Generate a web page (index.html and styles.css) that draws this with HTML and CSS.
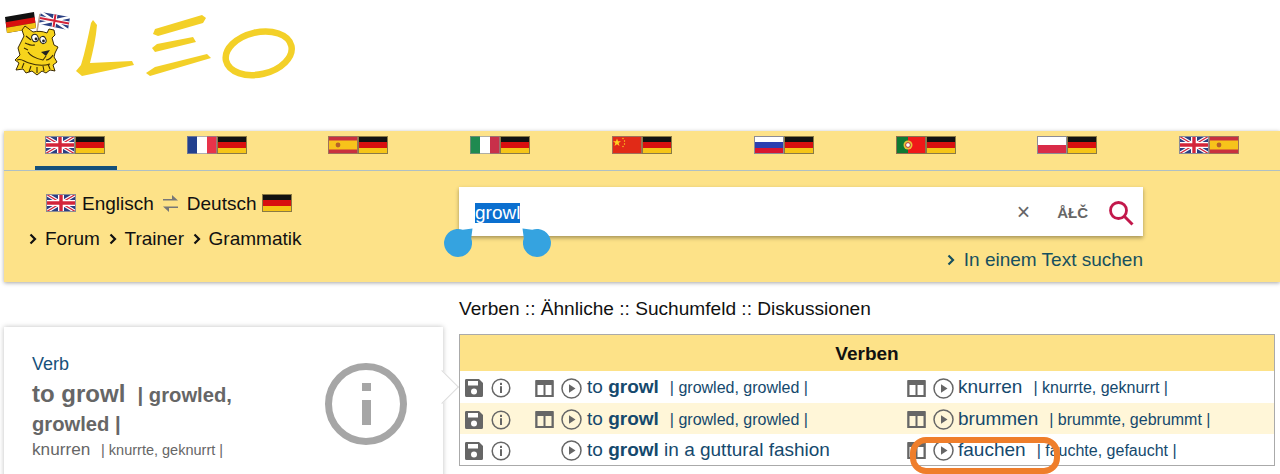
FILE: index.html
```html
<!DOCTYPE html>
<html lang="de">
<head>
<meta charset="utf-8">
<title>LEO Englisch-Deutsch</title>
<link rel="stylesheet" href="styles.css">
</head>
<body>
<svg class="defs" width="0" height="0" aria-hidden="true">
  <symbol id="de" viewBox="0 0 30 18"><rect width="30" height="6" fill="#111"/><rect y="6" width="30" height="6" fill="#d8100f"/><rect y="12" width="30" height="6" fill="#f5c518"/><rect x=".5" y=".5" width="29" height="17" fill="none" stroke="#8a7a45"/></symbol>
  <symbol id="uk" viewBox="0 0 30 18"><rect width="30" height="18" fill="#2a3f82"/><path d="M0 0L30 18M30 0L0 18" stroke="#fff" stroke-width="3.6"/><path d="M0 0L30 18M30 0L0 18" stroke="#d3243a" stroke-width="1.2"/><path d="M15 0V18M0 9H30" stroke="#fff" stroke-width="6"/><path d="M15 0V18M0 9H30" stroke="#d3243a" stroke-width="3.4"/><rect x=".5" y=".5" width="29" height="17" fill="none" stroke="#8c8c96"/></symbol>
  <symbol id="fr" viewBox="0 0 30 18"><rect width="10" height="18" fill="#22408f"/><rect x="10" width="10" height="18" fill="#fff"/><rect x="20" width="10" height="18" fill="#e8334a"/><rect x=".5" y=".5" width="29" height="17" fill="none" stroke="#8c8c96" stroke-opacity=".7"/></symbol>
  <symbol id="es" viewBox="0 0 30 18"><rect width="30" height="18" fill="#c9303e"/><rect y="4.5" width="30" height="9" fill="#f7c31b"/><circle cx="10" cy="9" r="2.4" fill="#b5612a"/><rect x=".5" y=".5" width="29" height="17" fill="none" stroke="#a0705a"/></symbol>
  <symbol id="it" viewBox="0 0 30 18"><rect width="10" height="18" fill="#1f8a50"/><rect x="10" width="10" height="18" fill="#fff"/><rect x="20" width="10" height="18" fill="#c9304a"/><rect x=".5" y=".5" width="29" height="17" fill="none" stroke="#8c8c80" stroke-opacity=".7"/></symbol>
  <symbol id="cn" viewBox="0 0 30 18"><rect width="30" height="18" fill="#e12a17"/><path d="M5 2.5l1 2.8 3-.1-2.400 1.800.9 2.900-2.500-1.700-2.500 1.700.9-2.900L1 5.200l3 .1z" fill="#ffd21f"/><circle cx="11" cy="2.500" r=".7" fill="#ffd21f"/><circle cx="12.500" cy="5" r=".7" fill="#ffd21f"/><circle cx="12.500" cy="8" r=".7" fill="#ffd21f"/><circle cx="11" cy="10.500" r=".7" fill="#ffd21f"/><rect x=".5" y=".5" width="29" height="17" fill="none" stroke="#a0705a"/></symbol>
  <symbol id="ru" viewBox="0 0 30 18"><rect width="30" height="6" fill="#fff"/><rect y="6" width="30" height="6" fill="#2b3fb0"/><rect y="12" width="30" height="6" fill="#d8152f"/><rect x=".5" y=".5" width="29" height="17" fill="none" stroke="#8c8c96"/></symbol>
  <symbol id="pt" viewBox="0 0 30 18"><rect width="30" height="18" fill="#f01818"/><rect width="12" height="18" fill="#0f7a32"/><circle cx="12" cy="9" r="4.500" fill="#e8c23a"/><circle cx="12" cy="9" r="2.400" fill="#fff" stroke="#b3352a"/><rect x=".5" y=".5" width="29" height="17" fill="none" stroke="#8c7050"/></symbol>
  <symbol id="pl" viewBox="0 0 30 18"><rect width="30" height="9" fill="#fff"/><rect y="9" width="30" height="9" fill="#d92b48"/><rect x=".5" y=".5" width="29" height="17" fill="none" stroke="#8c8c96"/></symbol>
  <symbol id="chev" viewBox="0 0 8 12"><path d="M1.500 1.500L6 6l-4.500 4.500" fill="none" stroke="currentColor" stroke-width="2.200"/></symbol>
  <symbol id="save" viewBox="0 0 20 20"><path d="M2 1h13l4 4v12.500a1.500 1.500 0 0 1-1.500 1.500h-15A1.500 1.500 0 0 1 1 17.500v-15A1.500 1.500 0 0 1 2 1z" fill="#666"/><rect x="4" y="3" width="10" height="4.500" fill="#fff"/><circle cx="10" cy="13.500" r="3" fill="#fff"/></symbol>
  <symbol id="info" viewBox="0 0 20 20"><circle cx="10" cy="10" r="8.800" fill="none" stroke="#666" stroke-width="1.500"/><rect x="9" y="4.800" width="2" height="2.200" fill="#666"/><rect x="9" y="8.200" width="2" height="6.800" fill="#666"/></symbol>
  <symbol id="book" viewBox="0 0 19 19"><path fill-rule="evenodd" d="M1 1h17a.8.8 0 0 1 .8.800V18H.2V1.800A.8.8 0 0 1 1 1zM2.500 6v10h6V6zm8 0v10h6V6z" fill="#666"/></symbol>
  <symbol id="play" viewBox="0 0 21 21"><circle cx="10.500" cy="10.500" r="9.500" fill="none" stroke="#666" stroke-width="1.500"/><path d="M8 6.200l6.500 4.300L8 14.800z" fill="#666"/></symbol>
  <symbol id="drop" viewBox="0 0 30 30"><path d="M29.500 1.500L28.200 11.200A14 14 0 1 1 19.800 2.800z" fill="#35a3e0"/></symbol>
</svg>

<header class="top">
  <svg class="logo" width="300" height="90" viewBox="0 0 300 90" role="img" aria-label="LEO">
    <path d="M37 31L40 14" stroke="#b9a38f" stroke-width="1.500"/>
    <path d="M5 17L34 12 36 28 7 33z" fill="#111"/>
    <path d="M5.700 22.300L34.700 17.300 35.400 22.700 6.400 27.700z" fill="#d8100f"/>
    <path d="M6.400 27.700L35.400 22.700 36 28 7 33z" fill="#f5c518"/>
    <path d="M41 12L70 17 68 30 39 24z" fill="#2a3f82"/>
    <path d="M41 12L68 30M70 17L39 24" stroke="#fff" stroke-width="2.500"/>
    <path d="M55.500 14.500L53.500 27M40 18L69 23.500" stroke="#fff" stroke-width="4"/>
    <path d="M55.500 14.500L53.500 27M40 18L69 23.500" stroke="#d3243a" stroke-width="2"/>
    <path d="M22 30L25 26 29 29 33 32C38 31 42 31 47 33L49 29 54 30 55 35 52 38 54 45 58 47 55 53 54 57 57 62 53 65 55 71 50 70 46 73 42 71 37 75 32 71 26 73 23 69 16 70 19 63 15 60 20 55 18 48 21 42 24 36z" fill="#f7d41c" stroke="#3a2a05" stroke-width="1"/>
    <ellipse cx="35" cy="38" rx="3.200" ry="3.800" fill="#fff" stroke="#222" transform="rotate(-20 35 38)"/>
    <ellipse cx="43" cy="40" rx="3" ry="3.600" fill="#fff" stroke="#222" transform="rotate(-20 43 40)"/>
    <circle cx="36" cy="39" r="1.400" fill="#222"/><circle cx="43.500" cy="41" r="1.400" fill="#222"/>
    <path d="M41 52L50 50 46 56z" fill="#222"/>
    <path d="M28 52C31 57 38 59 43 60L46 56M46 60C49 60 52 57 53 55M17 60C22 58 24 62 29 63 35 65 44 66 50 64M26 36L31 40M25 43L30 45M24 48L28 50M29 72L31 66M37 73V67M44 71L43 66M22 68L24 63M50 69L48 64M28 44C31 46 33 45 35 45" fill="none" stroke="#3a2a05" stroke-width="1.100"/>
    <g fill="#f3d028">
      <path d="M91 23L93 20 97 25C96 38 93 51 90 63L132 61 134 65 82 76 76 71 81 65C85 52 88 37 91 23z"/>
      <path d="M153 34L155 29 202 15 206 18 203 23 158 36z"/>
      <path d="M152 48L157 44 193 37 196 42 155 52z"/>
      <path d="M146 73L155 67 207 54 211 58 150 76z"/>
    </g>
    <ellipse cx="258.700" cy="53.300" rx="33.500" ry="21" fill="none" stroke="#f3d028" stroke-width="6.500" transform="rotate(-13 258.700 53.300)"/>
  </svg>
</header>

<section class="panel">
  <nav class="tabs">
    <a class="tab active"><svg class="flag"><use href="#uk"/></svg><svg class="flag"><use href="#de"/></svg></a>
    <a class="tab"><svg class="flag"><use href="#fr"/></svg><svg class="flag"><use href="#de"/></svg></a>
    <a class="tab"><svg class="flag"><use href="#es"/></svg><svg class="flag"><use href="#de"/></svg></a>
    <a class="tab"><svg class="flag"><use href="#it"/></svg><svg class="flag"><use href="#de"/></svg></a>
    <a class="tab"><svg class="flag"><use href="#cn"/></svg><svg class="flag"><use href="#de"/></svg></a>
    <a class="tab"><svg class="flag"><use href="#ru"/></svg><svg class="flag"><use href="#de"/></svg></a>
    <a class="tab"><svg class="flag"><use href="#pt"/></svg><svg class="flag"><use href="#de"/></svg></a>
    <a class="tab"><svg class="flag"><use href="#pl"/></svg><svg class="flag"><use href="#de"/></svg></a>
    <a class="tab"><svg class="flag"><use href="#uk"/></svg><svg class="flag"><use href="#es"/></svg></a>
  </nav>
  <div class="search-row">
    <div class="side">
      <div class="lang">
        <svg class="flag"><use href="#uk"/></svg>
        <span class="lang-a">Englisch</span>
        <svg class="swap" width="17" height="21" viewBox="0 0 17 21"><path d="M1 6h9V2l6 5.500H1zM16 15H7v4l-6-5.500H16z" fill="#777"/></svg>
        <span class="lang-b">Deutsch</span>
        <svg class="flag"><use href="#de"/></svg>
      </div>
      <div class="links">
        <a class="link"><svg class="chev"><use href="#chev"/></svg>Forum</a>
        <a class="link"><svg class="chev"><use href="#chev"/></svg>Trainer</a>
        <a class="link"><svg class="chev"><use href="#chev"/></svg>Grammatik</a>
      </div>
    </div>
    <div class="search-col">
      <div class="search">
        <span class="selected">growl</span>
        <span class="clear">×</span>
        <span class="chars">ÅŁČ</span>
        <svg class="lens" width="26" height="26" viewBox="0 0 26 26"><circle cx="10.500" cy="10.500" r="8" fill="none" stroke="#c2184b" stroke-width="2.800"/><path d="M16.500 16.500L24.500 24.500" stroke="#c2184b" stroke-width="3"/></svg>
        <svg class="handle handle-l"><use href="#drop"/></svg>
        <svg class="handle handle-r"><use href="#drop"/></svg>
      </div>
      <a class="textsearch"><svg class="chev"><use href="#chev"/></svg>In einem Text suchen</a>
    </div>
  </div>
</section>

<main class="content">
  <aside class="card">
    <div class="card-text">
      <div class="pos">Verb</div>
      <div class="head"><b class="big">to growl</b> <b class="forms">| growled,</b> <b class="forms">growled |</b></div>
      <div class="trans">knurren <small>| knurrte, geknurrt |</small></div>
    </div>
    <svg class="bigi" width="84" height="84" viewBox="0 0 84 84"><circle cx="42" cy="42" r="37.500" fill="none" stroke="#a6a6a6" stroke-width="7"/><rect x="38" y="21" width="9" height="8" fill="#a6a6a6"/><rect x="38" y="38" width="9" height="25" fill="#a6a6a6"/></svg>
  </aside>
  <div class="results">
    <div class="crumbs">Verben :: Ähnliche :: Suchumfeld :: Diskussionen</div>
    <div class="table">
      <div class="thead">Verben</div>
      <div class="row">
        <div class="tools"><svg class="i20"><use href="#save"/></svg><svg class="i20"><use href="#info"/></svg></div>
        <div class="cell"><svg class="i19"><use href="#book"/></svg><svg class="i21"><use href="#play"/></svg><span class="term">to <b>growl</b></span><span class="flex">| growled, growled |</span></div>
        <div class="cell"><svg class="i19"><use href="#book"/></svg><svg class="i21"><use href="#play"/></svg><span class="term">knurren</span><span class="flex">| knurrte, geknurrt |</span></div>
      </div>
      <div class="row alt">
        <div class="tools"><svg class="i20"><use href="#save"/></svg><svg class="i20"><use href="#info"/></svg></div>
        <div class="cell"><svg class="i19"><use href="#book"/></svg><svg class="i21"><use href="#play"/></svg><span class="term">to <b>growl</b></span><span class="flex">| growled, growled |</span></div>
        <div class="cell"><svg class="i19"><use href="#book"/></svg><svg class="i21"><use href="#play"/></svg><span class="term">brummen</span><span class="flex">| brummte, gebrummt |</span></div>
      </div>
      <div class="row">
        <div class="tools"><svg class="i20"><use href="#save"/></svg><svg class="i20"><use href="#info"/></svg></div>
        <div class="cell"><svg class="i19 none"><use href="#book"/></svg><svg class="i21"><use href="#play"/></svg><span class="term">to <b>growl</b> in a guttural fashion</span></div>
        <div class="cell"><svg class="i19"><use href="#book"/></svg><svg class="i21"><use href="#play"/></svg><span class="term">fauchen</span><span class="flex">| fauchte, gefaucht |</span><i class="mark"></i></div>
      </div>
    </div>
  </div>
</main>
</body>
</html>
```
FILE: styles.css
```css
* { box-sizing: border-box; }
html, body { margin: 0; height: 474px; overflow: hidden; background: #fff; }
body { font-family: "Liberation Sans", Arial, sans-serif; color: #111; font-size: 19px; }
.defs { position: absolute; }
.top { height: 131px; }
.logo { display: block; }

.panel { margin-left: 4px; height: 151px; background: #fde288; box-shadow: 0 1px 4px rgba(0,0,0,.35); }
.tabs { display: flex; height: 40px; border-bottom: 1px solid #afc0c4; }
.tab { flex: 1; display: flex; justify-content: center; }
.tab.active { position: relative; }
.tab.active::after { content: ""; position: absolute; left: 31px; width: 82px; top: 35px; height: 4px; background: #14507a; }
.flag { width: 30px; height: 18px; margin-top: 5px; display: block; }

.search-row { display: flex; }
.side { width: 455px; padding: 23px 0 0 25px; }
.lang { display: flex; align-items: center; padding-left: 17px; height: 18px; }
.lang .flag { margin-top: 0; }
.lang span { padding-top: 2px; }
.lang-a { margin: 0 7px 0 6px; }
.lang-b { margin: 0 5px 0 7px; }
.lang .swap { margin: 0 1px; }
.links { display: flex; gap: 8.6px; margin-top: 15.5px; line-height: 22px; }
.link { display: flex; align-items: center; }
.chev { width: 8px; height: 12px; margin-right: 8px; color: #111; }

.search-col { width: 684px; padding-top: 16px; }
.search { position: relative; height: 49px; background: #fff; box-shadow: 0 2px 4px rgba(0,0,0,.35); display: flex; align-items: center; padding-left: 16px; }
.selected { background: #0b6fcf; color: #fff; line-height: 20px; height: 20px; margin-top: 3px; }
.clear { margin-left: auto; color: #666; font-size: 23px; margin-right: 27px; margin-top: 2px; }
.chars { color: #666; font-weight: bold; font-size: 15px; margin-right: 20px; margin-top: 2px; }
.lens { margin-right: 9px; margin-top: 2px; }
.handle { position: absolute; width: 30px; height: 30px; top: 40px; }
.handle-l { left: -16px; }
.handle-r { left: 63px; transform: scaleX(-1); }
.textsearch { display: flex; justify-content: flex-end; align-items: center; color: #17505f; margin-top: 13px; line-height: 22px; }
.textsearch .chev { color: #17505f; margin-right: 9px; }

.content { display: flex; align-items: flex-start; margin-left: 4px; margin-top: 16px; }
.card { position: relative; width: 439px; height: 160px; margin-top: 29px; background: #fff; box-shadow: 0 0 5px rgba(0,0,0,.25); display: flex; padding: 26px 0 0 28px; }
.card::after { content: ""; position: absolute; right: -11px; top: 48px; width: 23px; height: 23px; background: #fff; transform: rotate(45deg); border-top: 1px solid #ddd; border-right: 1px solid #ddd; }
.card-text { width: 225px; }
.pos { color: #17507a; font-size: 18px; line-height: 22px; }
.head { color: #666; line-height: 29px; margin-top: 4px; }
.big { font-size: 24px; margin-right: 7px; }
.forms { font-size: 20.2px; }
.trans { color: #666; font-size: 17.2px; line-height: 24px; margin-top: -2px; }
.trans small { font-size: 14.5px; margin-left: 6px; }
.bigi { margin: 9px 0 0 67px; }

.results { margin-left: 16px; width: 816px; }
.crumbs { line-height: 22px; font-size: 19.1px; height: 36px; }
.table { border: 1px solid #aaa; }
.thead { height: 36px; background: #fde288; text-align: center; font-weight: bold; font-size: 19px; line-height: 38px; }
.row { display: grid; grid-template-columns: 74px 372px 1fr; height: 31px; align-items: center; padding-top: 2px; }
.thead + .row { height: 32px; }
.alt { background: #fff6d8; }
.tools { display: flex; gap: 7px; padding-left: 4px; }
.cell { position: relative; display: flex; align-items: center; }
.cell + .cell .i21 { margin-right: 4px; }
.i20 { width: 20px; height: 20px; }
.i19 { width: 19px; height: 19px; margin: 0 7px 0 1px; }
.i21 { width: 21px; height: 21px; margin-right: 5px; }
.none { visibility: hidden; }
.term { color: #15496d; font-size: 19px; margin-top: -2px; }
.flex { color: #15496d; font-size: 16px; margin-left: 11px; }
.mark { position: absolute; left: 4px; top: -3px; width: 150px; height: 37px; border: 6px solid #ef7e2b; border-radius: 16px; }
```
